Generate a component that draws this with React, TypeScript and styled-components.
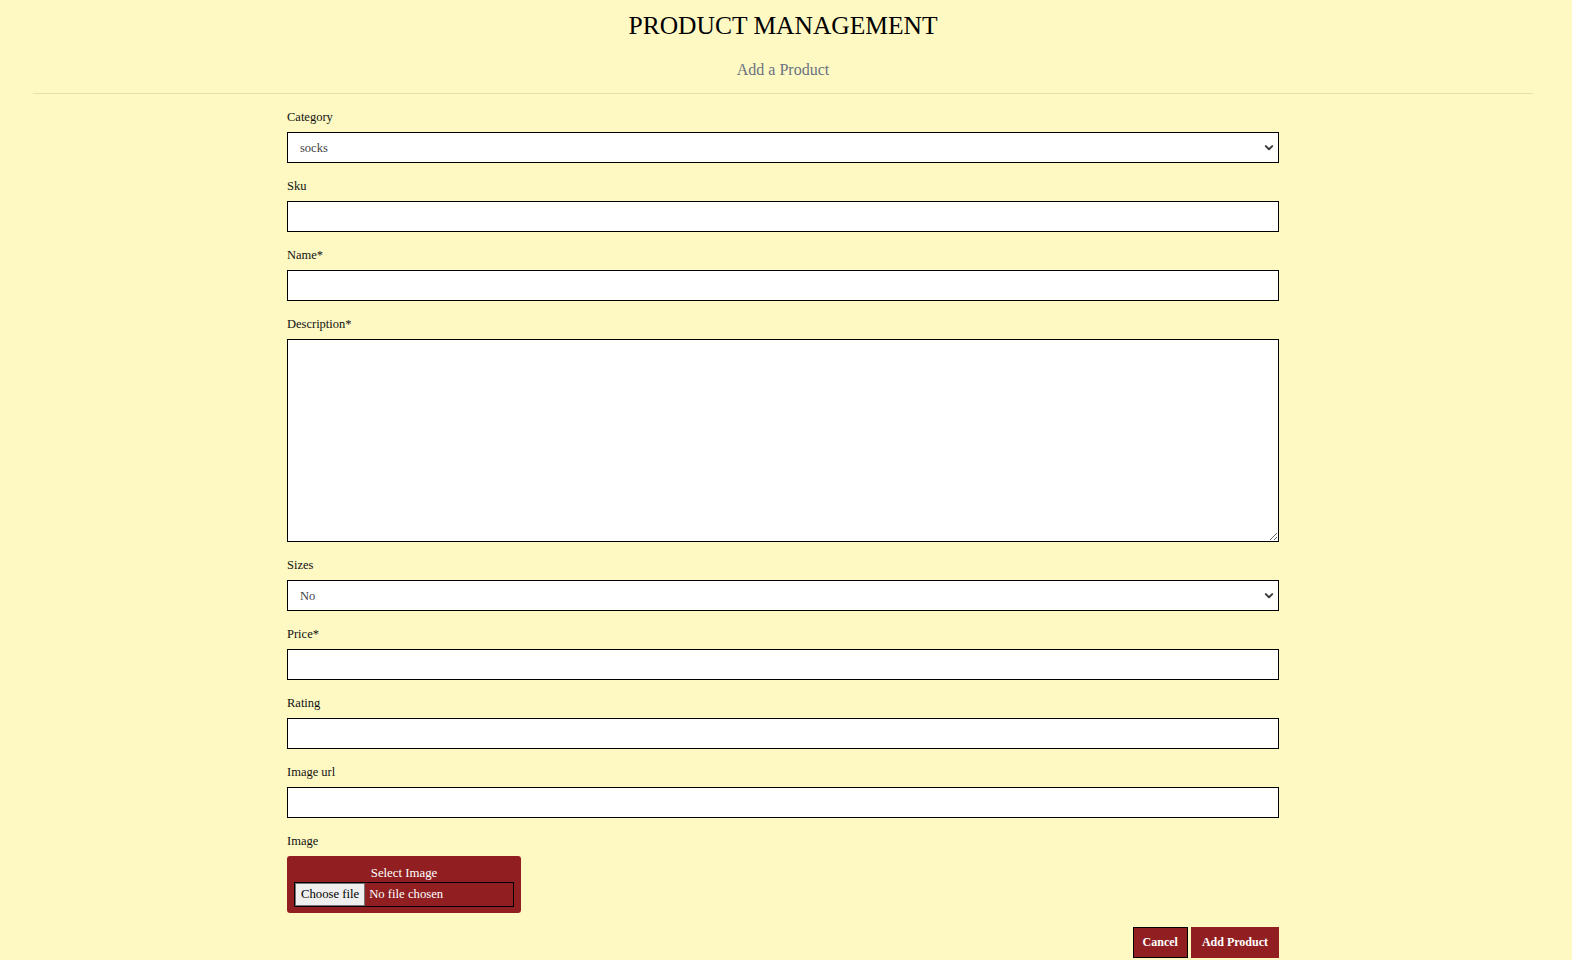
import React from "react";
import styled, { createGlobalStyle } from "styled-components";

const Global = createGlobalStyle`
  html, body {
    margin: 0;
    padding: 0;
    background: #fef9c3;
  }
  body {
    font-family: "Liberation Serif", "Times New Roman", serif;
    color: #000;
  }
`;

const Page = styled.div`
  padding: 0 6px 0 0;
  background: #fef9c3;
  min-height: 960px;
`;

const Header = styled.header`
  padding-top: 11px;
  text-align: center;
`;

const Title = styled.h1`
  margin: 0;
  font-size: 25.5px;
  line-height: 29px;
  font-weight: 400;
  color: #000;
`;

const Subtitle = styled.h2`
  margin: 21px 0 0;
  font-size: 16px;
  line-height: 18px;
  font-weight: 400;
  color: #6b7280;
`;

const Rule = styled.hr`
  margin: 14px 33px 0;
  border: 0;
  border-top: 1px solid #e6e0b2;
  height: 0;
`;

const Form = styled.form`
  width: 992px;
  margin: 0 auto;
  padding-top: 16px;
  display: flex;
  flex-direction: column;
  gap: 16px;
`;

const Field = styled.div`
  display: flex;
  flex-direction: column;
`;

const Label = styled.label`
  font-size: 12.5px;
  line-height: 15px;
  margin-bottom: 7px;
  color: #111;
`;

const controlBase = `
  box-sizing: border-box;
  width: 100%;
  border: 1px solid #000;
  background: #fff;
  font-family: "Liberation Serif", "Times New Roman", serif;
  font-size: 12.5px;
  color: #3f3f46;
  outline: none;
  border-radius: 0;
`;

const TextInput = styled.input`
  ${controlBase}
  height: 31px;
  padding: 0 12px;
`;

const TextArea = styled.textarea`
  ${controlBase}
  height: 203px;
  padding: 8px 12px;
  resize: vertical;
  display: block;
`;

const SelectWrap = styled.div`
  position: relative;
`;

const Select = styled.select`
  ${controlBase}
  height: 31px;
  padding: 0 30px 0 12px;
  appearance: none;
  -webkit-appearance: none;
`;

const Chevron = styled.svg`
  position: absolute;
  right: 5px;
  top: 50%;
  transform: translateY(-50%);
  pointer-events: none;
`;

const FileBox = styled.div`
  width: 234px;
  box-sizing: border-box;
  background: #911f22;
  border-radius: 3px;
  padding: 10px 7px 6px;
  display: flex;
  flex-direction: column;
  gap: 1px;
`;

const FileTitle = styled.span`
  text-align: center;
  color: #fff;
  font-size: 12.8px;
  line-height: 15px;
`;

const FileControl = styled.label`
  box-sizing: border-box;
  height: 25px;
  border: 1px solid #000;
  display: flex;
  align-items: stretch;
  cursor: pointer;
`;

const HiddenFile = styled.input`
  display: none;
`;

const ChooseButton = styled.span`
  display: flex;
  align-items: center;
  background: #efefef;
  border: 1px solid #767676;
  padding: 0 5px;
  font-size: 12.7px;
  color: #000;
`;

const FileStatus = styled.span`
  display: flex;
  align-items: center;
  margin-left: 4px;
  font-size: 12.7px;
  color: #fff;
`;

const Actions = styled.div`
  display: flex;
  justify-content: flex-end;
  gap: 3px;
  margin-top: -2px;
`;

const Button = styled.button<{ $outlined?: boolean }>`
  box-sizing: border-box;
  height: 31px;
  padding: 0 ${(p) => (p.$outlined ? "9px" : "11px")};
  background: #911f22;
  color: #fff;
  border: ${(p) => (p.$outlined ? "1.5px solid #000" : "0")};
  font-family: "Liberation Serif", "Times New Roman", serif;
  font-weight: 700;
  font-size: 12px;
  cursor: pointer;
`;

const ChevronIcon = () => (
  <Chevron width="10" height="7" viewBox="0 0 10 7">
    <path d="M1.8 1.6 L5 4.8 L8.2 1.6" fill="none" stroke="#3c3c3c" strokeWidth="2" strokeLinecap="round" strokeLinejoin="round" />
  </Chevron>
);

const textFields: { id: string; label: string }[] = [
  { id: "price", label: "Price*" },
  { id: "rating", label: "Rating" },
  { id: "imageUrl", label: "Image url" },
];

export default function App() {
  return (
    <Page>
      <Global />
      <Header>
        <Title>PRODUCT MANAGEMENT</Title>
        <Subtitle>Add a Product</Subtitle>
      </Header>
      <Rule />
      <Form onSubmit={(e) => e.preventDefault()}>
        <Field>
          <Label htmlFor="category">Category</Label>
          <SelectWrap>
            <Select id="category" defaultValue="socks">
              <option value="socks">socks</option>
              <option value="shoes">shoes</option>
              <option value="shirts">shirts</option>
            </Select>
            <ChevronIcon />
          </SelectWrap>
        </Field>
        <Field>
          <Label htmlFor="sku">Sku</Label>
          <TextInput id="sku" type="text" />
        </Field>
        <Field>
          <Label htmlFor="name">Name*</Label>
          <TextInput id="name" type="text" />
        </Field>
        <Field>
          <Label htmlFor="description">Description*</Label>
          <TextArea id="description" />
        </Field>
        <Field>
          <Label htmlFor="sizes">Sizes</Label>
          <SelectWrap>
            <Select id="sizes" defaultValue="no">
              <option value="no">No</option>
              <option value="yes">Yes</option>
            </Select>
            <ChevronIcon />
          </SelectWrap>
        </Field>
        {textFields.map((f) => (
          <Field key={f.id}>
            <Label htmlFor={f.id}>{f.label}</Label>
            <TextInput id={f.id} type="text" />
          </Field>
        ))}
        <Field>
          <Label as="span">Image</Label>
          <FileBox>
            <FileTitle>Select Image</FileTitle>
            <FileControl>
              <HiddenFile type="file" />
              <ChooseButton>Choose file</ChooseButton>
              <FileStatus>No file chosen</FileStatus>
            </FileControl>
          </FileBox>
        </Field>
        <Actions>
          <Button type="button" $outlined>
            Cancel
          </Button>
          <Button type="submit">Add Product</Button>
        </Actions>
      </Form>
    </Page>
  );
}
